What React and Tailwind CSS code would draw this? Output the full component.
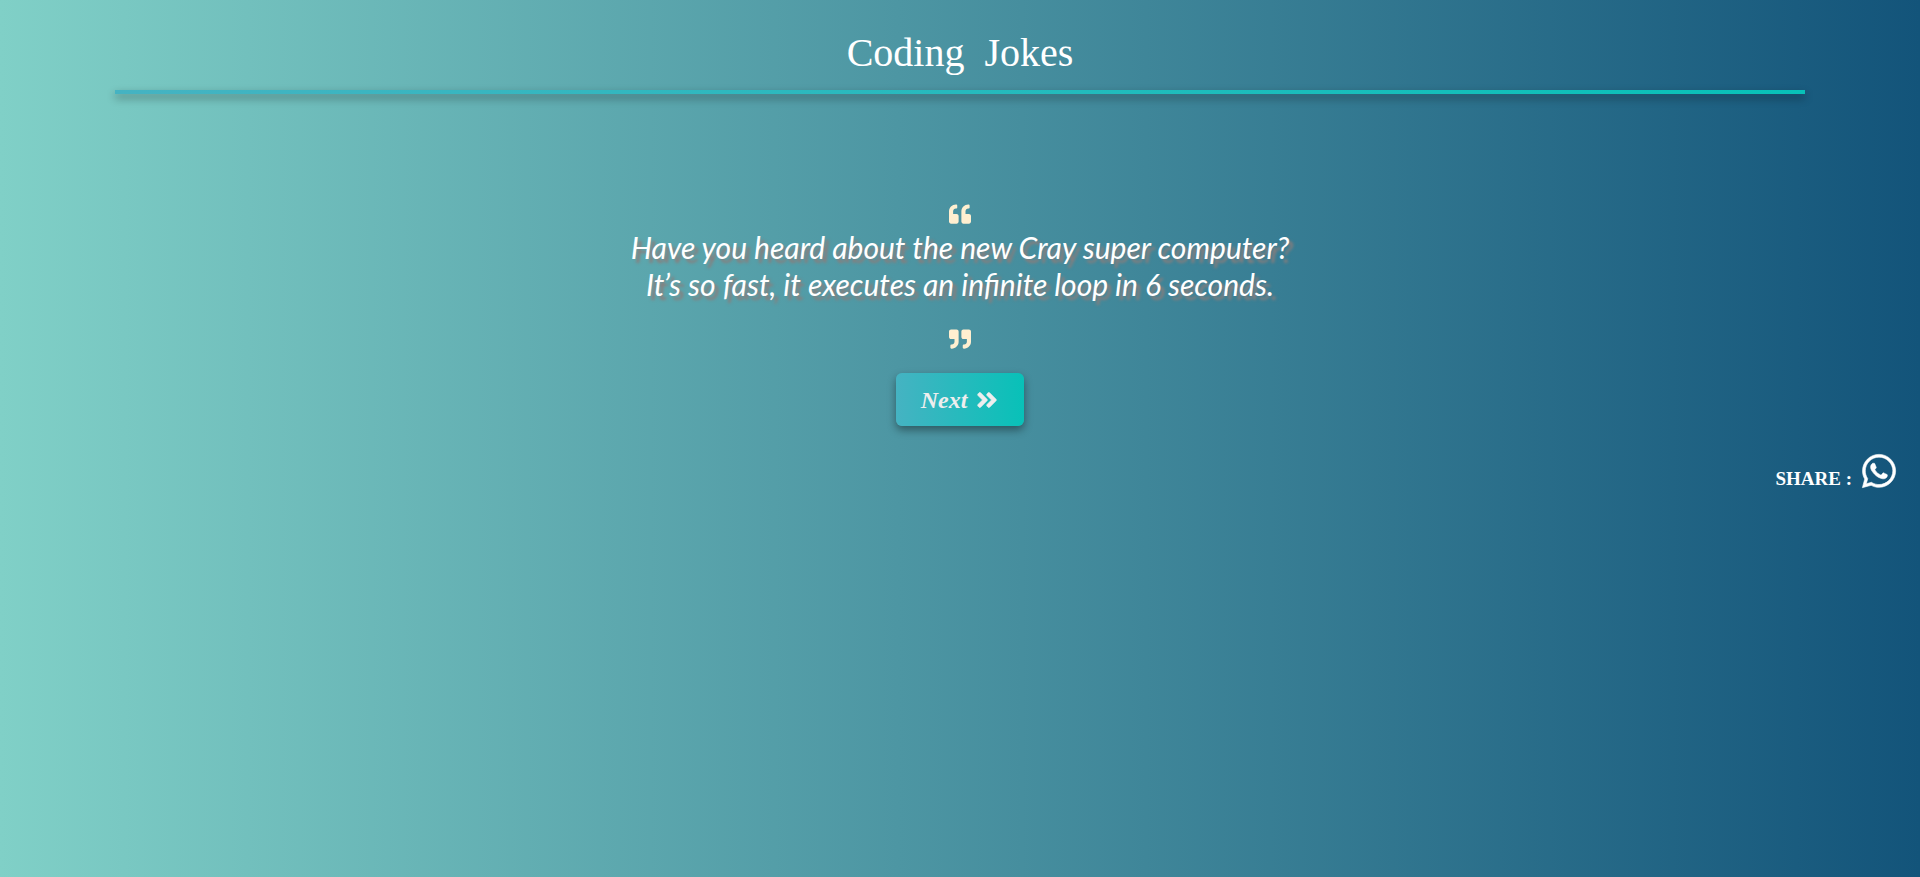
import { FaQuoteLeft, FaQuoteRight, FaAngleDoubleRight, FaWhatsapp } from "react-icons/fa";

export default function App() {
  return (
    <div className="min-h-screen bg-[linear-gradient(90deg,#80d0c7,#13547a)] font-['Liberation_Serif',serif] text-white">
      <header className="px-[6%] pt-[26px]">
        <h1 className="pb-2.5 text-center text-[40px] leading-[54px]">Coding&nbsp; Jokes</h1>
        <div className="h-1 bg-[linear-gradient(90deg,#45b3c2,#08c1b8)] shadow-[0_4px_8px_rgba(0,0,0,0.4)]" />
      </header>

      <main className="flex flex-col items-center pt-[109px]">
        <FaQuoteLeft className="size-[22px] text-[#ffefd0]" aria-hidden="true" />
        <p className="pt-1 text-center font-['Lato',sans-serif] text-[30px] leading-[37px] italic [text-shadow:4px_4px_3px_#8b7d7b]">
          Have you heard about the new Cray super computer?
          <br />
          It’s so fast, it executes an infinite loop in 6 seconds.
        </p>
        <FaQuoteRight className="mt-[25px] size-[22px] text-[#ffefd0]" aria-hidden="true" />
        <button
          type="button"
          className="mt-[23px] flex h-[53px] w-32 cursor-pointer items-center justify-center gap-2 rounded-md bg-[linear-gradient(90deg,#45b3c2,#08c1b8)] text-2xl font-bold text-[#eeeeee] italic shadow-[0_4px_8px_rgba(0,0,0,0.4)]"
        >
          Next
          <FaAngleDoubleRight className="size-6 stroke-[#eeeeee] stroke-[14px]" aria-hidden="true" />
        </button>
      </main>

      <aside className="flex items-end justify-end gap-2 pt-[26px] pr-[22px] text-[19px] leading-[22px] font-bold">
        <span>SHARE :</span>
        <a href="#share" aria-label="Share on WhatsApp">
          <FaWhatsapp className="size-[38px] stroke-white stroke-[8px]" />
        </a>
      </aside>
    </div>
  );
}
